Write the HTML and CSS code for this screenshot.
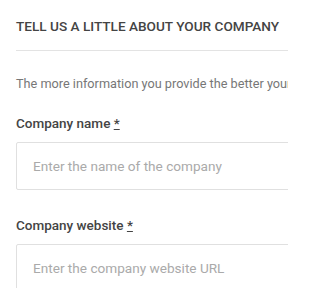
FILE: index.html
```html
<!DOCTYPE html>
<html>
<head>
<meta charset="utf-8">
<link rel="stylesheet" href="styles.css">
</head>
<body>
<div class="frame">
<div class="page">
  <h2 class="title">Tell us a little about your company</h2>
  <p class="intro">The more information you provide the better your</p>
  <div class="field">
    <label class="label">Company name <abbr class="req" title="required">*</abbr></label>
    <div class="input">Enter the name of the company</div>
  </div>
  <div class="field">
    <label class="label">Company website <abbr class="req" title="required">*</abbr></label>
    <div class="input">Enter the company website URL</div>
  </div>
</div>
</div>
</body>
</html>
```
FILE: styles.css
```css
html, body {
  margin: 0;
  padding: 0;
  background: #fff;
}
.frame {
  width: 288px;
  height: 288px;
  overflow: hidden;
}
.page {
  width: 420px;
  padding: 16px 0 0 16px;
  font-family: Roboto, "Liberation Sans", sans-serif;
}
.title {
  margin: 0;
  padding-bottom: 14px;
  border-bottom: 1px solid #e3e3e3;
  font-size: 13.6px;
  line-height: 20px;
  font-weight: 500;
  text-transform: uppercase;
  color: #444;
}
.intro {
  margin: 24px 0 0;
  font-size: 12.7px;
  line-height: 18px;
  color: #777;
  white-space: nowrap;
}
.field {
  margin-top: 21px;
}
.field + .field {
  margin-top: 26px;
}
.label {
  display: block;
  font-size: 13.5px;
  line-height: 19px;
  font-weight: 500;
  color: #444;
}
.req {
  text-decoration: underline;
  color: #444;
}
.input {
  margin-top: 9px;
  height: 46px;
  border: 1px solid #e0e0e0;
  border-radius: 2px;
  padding: 0 16px;
  font-size: 13.6px;
  line-height: 46px;
  color: #aaa;
}
```
